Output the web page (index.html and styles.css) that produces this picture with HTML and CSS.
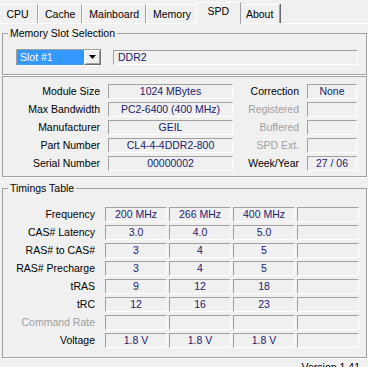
FILE: index.html
```html
<!DOCTYPE html>
<html lang="en">
<head>
    <meta charset="UTF-8">
    <meta name="viewport" content="width=device-width, initial-scale=1.0">
    <title>CPU-Z - SPD</title>
    <link rel="stylesheet" href="styles.css">
</head>
<body>
    <div class="window">
        <!-- Tab strip -->
        <div class="tabs">
            <div class="tab first">CPU</div>
            <div class="tab">Cache</div>
            <div class="tab">Mainboard</div>
            <div class="tab">Memory</div>
            <div class="tab active">SPD</div>
            <div class="tab last">About</div>
        </div>

        <div class="panel">
            <!-- Slot selection -->
            <fieldset class="group">
                <legend>Memory Slot Selection</legend>
                <div class="slot-row">
                    <div class="combo">
                        <span class="combo-value">Slot #1</span>
                        <span class="combo-btn">
                            <svg width="7" height="4" viewBox="0 0 7 4"><path d="M0 0h7L3.5 4z" fill="#000"/></svg>
                        </span>
                    </div>
                    <div class="field left type-field">DDR2</div>
                </div>
            </fieldset>

            <!-- Module info -->
            <div class="group module-group">
                <div class="label">Module Size</div>
                <div class="field">1024 MBytes</div>
                <div class="label">Correction</div>
                <div class="field">None</div>

                <div class="label">Max Bandwidth</div>
                <div class="field">PC2-6400 (400 MHz)</div>
                <div class="label disabled">Registered</div>
                <div class="field"></div>

                <div class="label">Manufacturer</div>
                <div class="field">GEIL</div>
                <div class="label disabled">Buffered</div>
                <div class="field"></div>

                <div class="label">Part Number</div>
                <div class="field">CL4-4-4DDR2-800</div>
                <div class="label disabled">SPD Ext.</div>
                <div class="field"></div>

                <div class="label">Serial Number</div>
                <div class="field">00000002</div>
                <div class="label">Week/Year</div>
                <div class="field">27 / 06</div>
            </div>

            <!-- Timings -->
            <fieldset class="group timings-group">
                <legend>Timings Table</legend>
                <div class="timings">
                    <div class="label">Frequency</div>
                    <div class="field">200 MHz</div>
                    <div class="field">266 MHz</div>
                    <div class="field">400 MHz</div>
                    <div class="field"></div>

                    <div class="label">CAS# Latency</div>
                    <div class="field">3.0</div>
                    <div class="field">4.0</div>
                    <div class="field">5.0</div>
                    <div class="field"></div>

                    <div class="label">RAS# to CAS#</div>
                    <div class="field">3</div>
                    <div class="field">4</div>
                    <div class="field">5</div>
                    <div class="field"></div>

                    <div class="label">RAS# Precharge</div>
                    <div class="field">3</div>
                    <div class="field">4</div>
                    <div class="field">5</div>
                    <div class="field"></div>

                    <div class="label">tRAS</div>
                    <div class="field">9</div>
                    <div class="field">12</div>
                    <div class="field">18</div>
                    <div class="field"></div>

                    <div class="label">tRC</div>
                    <div class="field">12</div>
                    <div class="field">16</div>
                    <div class="field">23</div>
                    <div class="field"></div>

                    <div class="label disabled">Command Rate</div>
                    <div class="field"></div>
                    <div class="field"></div>
                    <div class="field"></div>
                    <div class="field"></div>

                    <div class="label">Voltage</div>
                    <div class="field">1.8 V</div>
                    <div class="field">1.8 V</div>
                    <div class="field">1.8 V</div>
                    <div class="field"></div>
                </div>
            </fieldset>

            <div class="version">Version 1.41</div>
        </div>
    </div>
</body>
</html>
```

FILE: styles.css
```css
/* Reset some default styles */
body, html {
    margin: 0;
    padding: 0;
    font-family: "Liberation Sans", Arial, sans-serif;
    font-size: 10.5px;
    background-color: #f0f0f0;
    color: #000;
}

.window {
    width: 368px;
    height: 367px;
    overflow: hidden;
}

/* Tabs */
.tabs {
    display: flex;
    align-items: flex-end;
    height: 23px;
    border-bottom: 1px solid #fff;
}

.tab {
    position: relative;
    box-sizing: border-box;
    height: 19px;
    min-width: 41px;
    padding: 0 6px;
    line-height: 18px;
    text-align: center;
    border-top: 1px solid #fff;
    border-left: 1px solid #fff;
    border-right: 1px solid #a0a0a0;
}

.tab.first {
    margin-left: -3px;
}

.tab.last {
    box-shadow: 1px 0 0 #696969;
}

.tab.active {
    height: 22px;
    min-width: 45px;
    margin: 0 -2px -1px -2px;
    background-color: #f0f0f0;
    line-height: 17px;
    z-index: 1;
}

.panel {
    padding: 3px 1px 0 2px;
}

/* Group boxes */
.group {
    margin: 0;
    padding: 0;
    border: 1px solid #a0a0a0;
    box-shadow: 1px 1px 0 #fff;
    min-width: 0;
}

.group legend {
    margin-left: 5px;
    padding: 0 2px;
    line-height: 13px;
}

.slot-row {
    display: flex;
    align-items: center;
    gap: 11px;
    padding: 9px 8px 8px 13px;
}

.combo {
    display: flex;
    gap: 1px;
    height: 15px;
    border: 1px solid;
    border-color: #a0a0a0 #fff #fff #a0a0a0;
}

.combo-value {
    width: 64px;
    padding-left: 3px;
    background-color: #3399ff;
    color: #fff;
    line-height: 15px;
}

.combo-btn {
    box-sizing: border-box;
    width: 16px;
    display: flex;
    justify-content: center;
    align-items: center;
    background-color: #f0f0f0;
    border-right: 1px solid #696969;
    border-bottom: 1px solid #696969;
    box-shadow: inset 1px 1px 0 #fff, inset -1px -1px 0 #a0a0a0;
}

.field {
    box-sizing: border-box;
    height: 15px;
    border: 1px solid;
    border-color: #a0a0a0 #fff #fff #a0a0a0;
    color: #20206e;
    line-height: 13px;
    text-align: center;
    white-space: nowrap;
    overflow: hidden;
}

.field.left {
    text-align: left;
    padding-left: 4px;
}

.type-field {
    flex: 1;
}

.label {
    line-height: 15px;
    text-align: right;
    white-space: nowrap;
}

.label.disabled {
    color: #a0a0a0;
}

.module-group {
    margin-top: 1px;
    display: grid;
    grid-template-columns: 97px 125px 58px 50px;
    grid-auto-rows: 15px;
    column-gap: 8px;
    row-gap: 3px;
    padding: 7px 9px 5px 0;
}

.timings-group {
    margin-top: 5px;
}

.timings {
    display: grid;
    grid-template-columns: 100px repeat(4, 62px);
    grid-auto-rows: 15px;
    column-gap: 2px;
    row-gap: 3px;
    padding: 12px 0 9px 0;
}

.timings .label {
    padding-right: 8px;
}

.version {
    margin-top: 3px;
    padding-right: 7px;
    line-height: 13px;
    text-align: right;
}
```
